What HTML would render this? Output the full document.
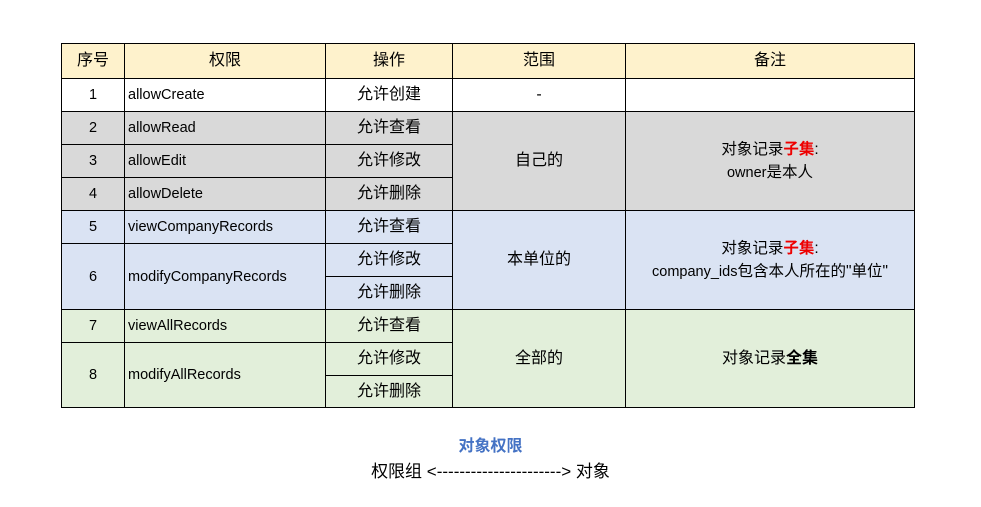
<!DOCTYPE html>
<html><head><meta charset="utf-8"><style>
body{margin:0;background:#fff;width:981px;height:507px;overflow:hidden;font-family:"Liberation Sans","Noto Sans CJK SC",sans-serif;color:#000}
table{position:absolute;left:61px;top:43px;border-collapse:collapse;table-layout:fixed}
td{border:1px solid #000;padding:0;text-align:center;font-size:16px;height:32px;line-height:18px;white-space:nowrap}
td.l{text-align:left;padding-left:3px;font-size:14.5px}
td.n{font-size:14.5px}
tr.h td{background:#fef2cc;height:34px}
tr.last td{height:31px}
.g td{background:#d9d9d9}.b td{background:#dae3f3}.gr td{background:#e2efda}
.r{color:#e00;font-weight:bold}
.cap{position:absolute;left:0;width:981px;text-align:center}
</style></head><body>
<table>
<colgroup><col style="width:63px"><col style="width:201px"><col style="width:127px"><col style="width:173px"><col style="width:289px"></colgroup>
<tr class="h"><td>序号</td><td>权限</td><td>操作</td><td>范围</td><td>备注</td></tr>
<tr><td class="n">1</td><td class="l">allowCreate</td><td>允许创建</td><td>-</td><td></td></tr>
<tr class="g"><td class="n">2</td><td class="l">allowRead</td><td>允许查看</td><td rowspan="3">自己的</td><td rowspan="3" style="font-size:15.5px;line-height:23px">对象记录<span class="r">子集</span>:<br><span style="font-size:14.5px">owner</span>是本人</td></tr>
<tr class="g"><td class="n">3</td><td class="l">allowEdit</td><td>允许修改</td></tr>
<tr class="g"><td class="n">4</td><td class="l">allowDelete</td><td>允许删除</td></tr>
<tr class="b"><td class="n">5</td><td class="l">viewCompanyRecords</td><td>允许查看</td><td rowspan="3">本单位的</td><td rowspan="3" style="font-size:15.5px;line-height:23px">对象记录<span class="r">子集</span>:<br><span style="font-size:14.5px">company_ids</span>包含本人所在的"单位"</td></tr>
<tr class="b"><td class="n" rowspan="2">6</td><td class="l" rowspan="2">modifyCompanyRecords</td><td>允许修改</td></tr>
<tr class="b"><td>允许删除</td></tr>
<tr class="gr"><td class="n">7</td><td class="l">viewAllRecords</td><td>允许查看</td><td rowspan="3">全部的</td><td rowspan="3">对象记录<b>全集</b></td></tr>
<tr class="gr"><td class="n" rowspan="2">8</td><td class="l" rowspan="2">modifyAllRecords</td><td>允许修改</td></tr>
<tr class="gr last"><td>允许删除</td></tr>
</table>
<div class="cap" style="top:432px;color:#4472c4;font-weight:bold;font-size:16px">对象权限</div>
<div class="cap" style="top:457px;font-size:17px">权限组 &lt;----------------------&gt; 对象</div>
</body></html>
